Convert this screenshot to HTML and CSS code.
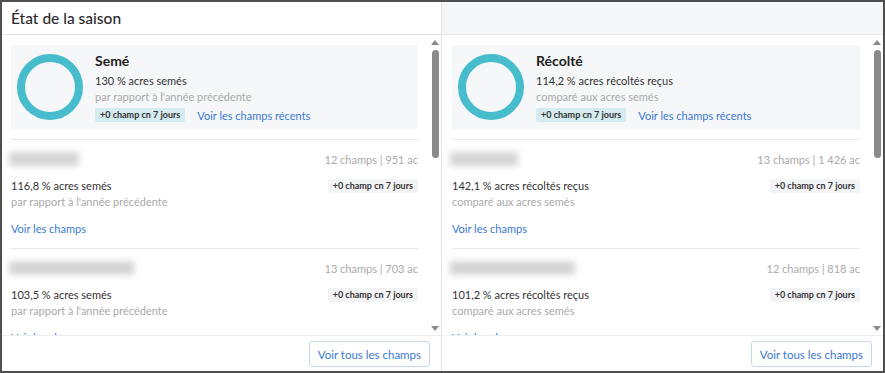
FILE: index.html
```html
<!DOCTYPE html>
<html lang="fr">
<head>
    <meta charset="UTF-8">
    <title>État de la saison</title>
    <link rel="stylesheet" href="styles.css">
</head>
<body>
    <div class="frame">
        <!-- Colonne semis -->
        <div class="column left">
            <div class="header">
                <h2>État de la saison</h2>
            </div>
            <div class="body">
                <div class="list">
                    <div class="summary">
                        <svg class="donut" width="68" height="68" viewBox="0 0 68 68">
                            <circle cx="34" cy="34" r="29" fill="none" stroke="#47bccc" stroke-width="8"/>
                        </svg>
                        <div class="summary-text">
                            <h3>Semé</h3>
                            <p class="stat">130 % acres semés</p>
                            <p class="sub">par rapport à l'année précédente</p>
                            <div class="summary-foot">
                                <span class="badge teal">+0 champ cn 7 jours</span>
                                <a href="#" class="link">Voir les champs récents</a>
                            </div>
                        </div>
                    </div>

                    <div class="row">
                        <div class="row-head">
                            <span class="blur" style="width: 70px"></span>
                            <span class="count">12 champs | 951 ac</span>
                        </div>
                        <div class="row-stat">
                            <span class="stat">116,8 % acres semés</span>
                            <span class="badge">+0 champ cn 7 jours</span>
                        </div>
                        <p class="sub">par rapport à l'année précédente</p>
                        <a href="#" class="link row-link">Voir les champs</a>
                    </div>

                    <div class="row">
                        <div class="row-head">
                            <span class="blur" style="width: 125px"></span>
                            <span class="count">13 champs | 703 ac</span>
                        </div>
                        <div class="row-stat">
                            <span class="stat">103,5 % acres semés</span>
                            <span class="badge">+0 champ cn 7 jours</span>
                        </div>
                        <p class="sub">par rapport à l'année précédente</p>
                        <a href="#" class="link row-link">Voir les champs</a>
                    </div>
                </div>
                <div class="scrollbar">
                    <span class="arrow up"></span>
                    <span class="thumb"></span>
                    <span class="arrow down"></span>
                </div>
            </div>
            <div class="footer">
                <button class="all-btn">Voir tous les champs</button>
            </div>
        </div>

        <!-- Colonne récolte -->
        <div class="column right">
            <div class="header grey"></div>
            <div class="body">
                <div class="list">
                    <div class="summary">
                        <svg class="donut" width="68" height="68" viewBox="0 0 68 68">
                            <circle cx="34" cy="34" r="29" fill="none" stroke="#47bccc" stroke-width="8"/>
                        </svg>
                        <div class="summary-text">
                            <h3>Récolté</h3>
                            <p class="stat">114,2 % acres récoltés reçus</p>
                            <p class="sub">comparé aux acres semés</p>
                            <div class="summary-foot">
                                <span class="badge teal">+0 champ cn 7 jours</span>
                                <a href="#" class="link">Voir les champs récents</a>
                            </div>
                        </div>
                    </div>

                    <div class="row">
                        <div class="row-head">
                            <span class="blur" style="width: 68px"></span>
                            <span class="count">13 champs | 1 426 ac</span>
                        </div>
                        <div class="row-stat">
                            <span class="stat">142,1 % acres récoltés reçus</span>
                            <span class="badge">+0 champ cn 7 jours</span>
                        </div>
                        <p class="sub">comparé aux acres semés</p>
                        <a href="#" class="link row-link">Voir les champs</a>
                    </div>

                    <div class="row">
                        <div class="row-head">
                            <span class="blur" style="width: 125px"></span>
                            <span class="count">12 champs | 818 ac</span>
                        </div>
                        <div class="row-stat">
                            <span class="stat">101,2 % acres récoltés reçus</span>
                            <span class="badge">+0 champ cn 7 jours</span>
                        </div>
                        <p class="sub">comparé aux acres semés</p>
                        <a href="#" class="link row-link">Voir les champs</a>
                    </div>
                </div>
                <div class="scrollbar">
                    <span class="arrow up"></span>
                    <span class="thumb"></span>
                    <span class="arrow down"></span>
                </div>
            </div>
            <div class="footer">
                <button class="all-btn">Voir tous les champs</button>
            </div>
        </div>
    </div>
</body>
</html>
```

FILE: styles.css
```css
body {
    margin: 0;
    font-family: Lato, "Open Sans", sans-serif;
    color: #333333;
    background-color: #ffffff;
}

p {
    margin: 0;
}

.frame {
    width: 881px;
    height: 369px;
    border: 2px solid #4f4f4f;
    display: flex;
    background-color: #ffffff;
}

.column {
    display: flex;
    flex-direction: column;
    overflow: hidden;
}

.column.left {
    width: 439px;
    border-right: 1px solid #e3e5e8;
}

.column.right {
    flex: 1;
}

.header {
    height: 32px;
    border-bottom: 1px solid #e3e5e8;
    display: flex;
    align-items: center;
    padding-left: 9px;
}

.header.grey {
    background-color: #f5f6f8;
}

.header h2 {
    margin: 0;
    font-size: 15.5px;
    font-weight: 500;
    color: #2b2b2b;
}

.body {
    flex: 1;
    display: flex;
    overflow: hidden;
}

.list {
    flex: 1;
    overflow: hidden;
    padding: 10px 11px 0 9px;
}

.right .list {
    padding: 10px 11px 0 10px;
}

.summary {
    display: flex;
    align-items: center;
    background-color: #f5f7f9;
    height: 84px;
    padding-left: 5px;
    margin-bottom: 10px;
}

.donut {
    flex-shrink: 0;
    margin-right: 11px;
}

.summary-text h3 {
    margin: 0 0 3px;
    font-size: 14px;
    font-weight: 700;
    color: #222222;
    line-height: 18px;
}

.stat {
    font-size: 11px;
    line-height: 16px;
    color: #333333;
}

.sub {
    font-size: 11px;
    line-height: 16px;
    color: #aaaaaa;
}

.summary-foot {
    display: flex;
    align-items: center;
    margin-top: 3px;
}

.badge {
    font-size: 9px;
    font-weight: 700;
    color: #333333;
    background-color: #f3f4f6;
    padding: 0 5px;
    line-height: 14px;
    border-radius: 2px;
}

.badge.teal {
    background-color: #d4ecef;
    margin-right: 12px;
}

.link {
    font-size: 11px;
    color: #3a78d4;
    text-decoration: none;
}

.row {
    border-top: 1px solid #e6e8eb;
    padding: 10px 0 11px;
}

.row-head {
    display: flex;
    justify-content: space-between;
    align-items: center;
    height: 18px;
}

.blur {
    display: block;
    height: 14px;
    margin-left: -2px;
    background-color: #d4d4d4;
    filter: blur(3px);
}

.count {
    font-size: 11px;
    color: #aaaaaa;
}

.row-stat {
    display: flex;
    justify-content: space-between;
    align-items: center;
    margin-top: 10px;
    height: 16px;
}

.row-link {
    display: block;
    margin-top: 11px;
    line-height: 16px;
}

.scrollbar {
    width: 12px;
    display: flex;
    flex-direction: column;
    align-items: center;
    padding: 5px 0 4px;
}

.arrow {
    width: 0;
    height: 0;
    border-left: 4px solid transparent;
    border-right: 4px solid transparent;
}

.arrow.up {
    border-bottom: 5px solid #8a8a8a;
}

.arrow.down {
    margin-top: auto;
    border-top: 5px solid #8a8a8a;
}

.thumb {
    width: 7px;
    height: 108px;
    margin-top: 5px;
    background-color: #8a8a8a;
    border-radius: 4px;
}

.footer {
    height: 36px;
    border-top: 1px solid #eeeeee;
    display: flex;
    justify-content: flex-end;
    align-items: flex-start;
    padding: 5px 11px 0 0;
    box-sizing: border-box;
}

.all-btn {
    height: 26px;
    padding: 0 8px;
    font-family: Lato, "Open Sans", sans-serif;
    font-size: 11.5px;
    color: #3a78d4;
    background-color: #ffffff;
    border: 1px solid #c7d7ec;
    border-radius: 3px;
}
```
